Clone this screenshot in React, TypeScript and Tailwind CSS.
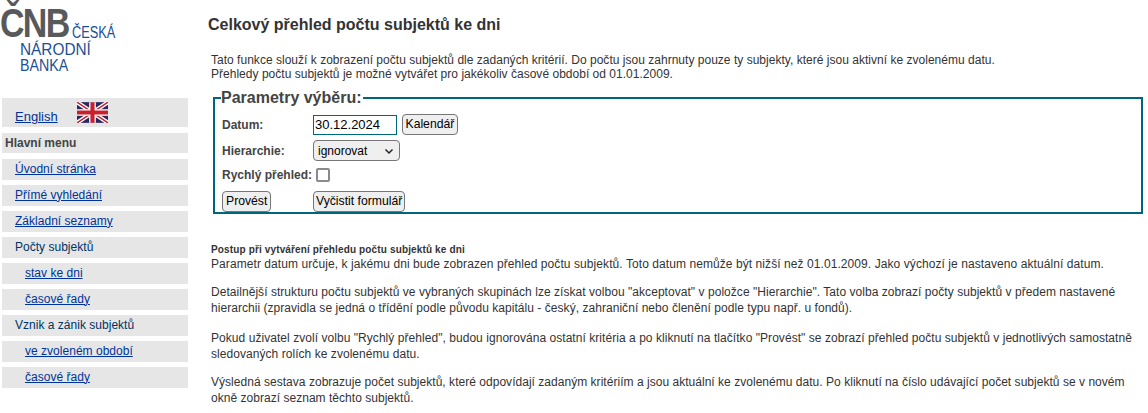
import React from "react";

const sans = { fontFamily: '"Liberation Sans", Arial, sans-serif' };

const Flag = () => (
    <svg width="31" height="21" viewBox="0 0 60 40" className="block">
        <rect width="60" height="40" fill="#27285f" />
        <path d="M0 0L60 40M60 0L0 40" stroke="#fff" strokeWidth="8" />
        <path d="M0 0L60 40M60 0L0 40" stroke="#c8202f" strokeWidth="3" />
        <path d="M30 0V40M0 20H60" stroke="#fff" strokeWidth="13" />
        <path d="M30 0V40M0 20H60" stroke="#c8202f" strokeWidth="8" />
    </svg>
);

const MenuLink = ({ label, sub, plain }: { label: string; sub?: boolean; plain?: boolean }) => (
    <div className={`h-[21px] mb-[5px] bg-[#e6e6e6] flex items-center pb-[2px] text-[12px] tracking-[0.02px] ${sub ? "pl-[23px]" : "pl-[13px]"}`}>
        {plain ? (
            <span className="text-[#003366]">{label}</span>
        ) : (
            <a href="#" className="text-[#003399] underline">{label}</a>
        )}
    </div>
);

const Sidebar = () => (
    <aside className="w-[186px] ml-[2px] shrink-0">
        <div className="h-[98px] relative">
            <div className="absolute left-[-2px] top-[4px] text-[#58595b] font-bold text-[40px] leading-[38px] tracking-[-2px] whitespace-nowrap scale-x-[0.85] origin-left">ČNB</div>
            <div className="absolute left-[70px] top-[25px] text-[#1c4f96] text-[16px] leading-[16px] whitespace-nowrap scale-x-[0.8] origin-left">ČESKÁ</div>
            <div className="absolute left-[18px] top-[42px] text-[#1c4f96] text-[16px] leading-[16px] whitespace-nowrap scale-x-[0.96] origin-left">NÁRODNÍ</div>
            <div className="absolute left-[18px] top-[58px] text-[#1c4f96] text-[16px] leading-[16px] whitespace-nowrap scale-x-[0.89] origin-left">BANKA</div>
        </div>
        <div className="h-[29px] mb-[6px] bg-[#e6e6e6] flex items-start pl-[13px] text-[13px]">
            <a href="#" className="text-[#003399] underline mt-[9px]">English</a>
            <span className="ml-[19px] mt-[4px]"><Flag /></span>
        </div>
        <div className="h-[20px] mb-[6px] bg-[#e6e6e6] flex items-center pl-[3px] text-[12px] font-bold text-[#444]">Hlavní menu</div>
        <MenuLink label="Úvodní stránka" />
        <MenuLink label="Přímé vyhledání" />
        <MenuLink label="Základní seznamy" />
        <MenuLink label="Počty subjektů" plain />
        <MenuLink label="stav ke dni" sub />
        <MenuLink label="časové řady" sub />
        <MenuLink label="Vznik a zánik subjektů" plain />
        <MenuLink label="ve zvoleném období" sub />
        <MenuLink label="časové řady" sub />
    </aside>
);

const btn = "h-[21px] text-[12.2px] text-black bg-[#efefef] border border-[#767676] rounded-[4px] leading-none whitespace-nowrap";

const Form = () => (
    <fieldset className="ml-[5px] mr-[5px] h-[125px] border-2 border-[#006680] px-[6px] pb-0 pt-0 mt-[8px]">
        <legend className="text-[16px] font-bold text-[#444] leading-[18px] px-0 pr-[1px]">Parametry výběru:</legend>
        <div className="flex flex-col text-[12px] text-[#333] ml-[1px]">
            <div className="flex items-center h-[21px] mt-[7px]">
                <span className="w-[91px] font-bold text-[#444]">Datum:</span>
                <input readOnly value="30.12.2024" className="w-[84px] h-[20px] border border-[#006680] px-[1px] text-[13px] text-black outline-none" />
                <button className={`${btn} px-[2.5px] ml-[5px]`}>Kalendář</button>
            </div>
            <div className="flex items-center h-[21px] mt-[5px]">
                <span className="w-[91px] font-bold text-[#444]">Hierarchie:</span>
                <span className="w-[87px] h-[21px] bg-[#efefef] border border-[#767676] rounded-[4px] flex items-center justify-between pl-[4px] pr-[5px] text-black">
                    ignorovat
                    <svg width="10" height="10" viewBox="0 0 10 10"><path d="M1.5 3.5L5 7L8.5 3.5" fill="none" stroke="#222" strokeWidth="1.5" /></svg>
                </span>
            </div>
            <div className="flex items-center h-[21px] mt-[3px]">
                <span className="w-[94px] font-bold text-[#444] whitespace-nowrap">Rychlý přehled:</span>
                <span className="w-[14px] h-[14px] bg-white border-2 border-[#8a8a8a] rounded-[2px] mt-[1px]" />
            </div>
            <div className="flex items-center h-[21px] mt-[6px]">
                <div className="w-[91px]"><button className={`${btn} px-[3px]`}>Provést</button></div>
                <button className={`${btn} px-[2px]`}>Vyčistit formulář</button>
            </div>
        </div>
    </fieldset>
);

const Main = () => (
    <main className="flex-1 ml-[20px] min-w-0">
        <h1 className="text-[16px] font-bold text-[#333] mt-[16px] leading-[18px]">Celkový přehled počtu subjektů ke dni</h1>
        <p className="text-[12px] leading-[14px] text-[#333] mt-[19px] ml-[3px] tracking-[0.02px]">
            Tato funkce slouží k zobrazení počtu subjektů dle zadaných kritérií. Do počtu jsou zahrnuty pouze ty subjekty, které jsou aktivní ke zvolenému datu.<br />
            Přehledy počtu subjektů je možné vytvářet pro jakékoliv časové období od 01.01.2009.
        </p>
        <Form />
        <div className="ml-[3px] mr-[4px] mt-[30px] text-[12px] leading-[16px] text-[#333]">
            <div className="text-[10px] font-bold leading-[11px] tracking-[0.14px]">Postup při vytváření přehledu počtu subjektů ke dni</div>
            <p className="mt-[1px] tracking-[0.075px]">Parametr datum určuje, k jakému dni bude zobrazen přehled počtu subjektů. Toto datum nemůže být nižší než 01.01.2009. Jako výchozí je nastaveno aktuální datum.</p>
            <p className="mt-[12px] tracking-[0.045px]">Detailnější strukturu počtu subjektů ve vybraných skupinách lze získat volbou "akceptovat" v položce "Hierarchie". Tato volba zobrazí počty subjektů v předem nastavené hierarchii (zpravidla se jedná o třídění podle původu kapitálu - český, zahraniční nebo členění podle typu např. u fondů).</p>
            <p className="mt-[14px] tracking-[0.05px]">Pokud uživatel zvolí volbu "Rychlý přehled", budou ignorována ostatní kritéria a po kliknutí na tlačítko "Provést" se zobrazí přehled počtu subjektů v jednotlivých samostatně sledovaných rolích ke zvolenému datu.</p>
            <p className="mt-[12px] tracking-[0.03px]">Výsledná sestava zobrazuje počet subjektů, které odpovídají zadaným kritériím a jsou aktuální ke zvolenému datu. Po kliknutí na číslo udávající počet subjektů se v novém okně zobrazí seznam těchto subjektů.</p>
        </div>
    </main>
);

export default function App() {
    return (
        <div className="w-[1148px] h-[413px] overflow-hidden flex bg-white" style={sans}>
            <Sidebar />
            <Main />
        </div>
    );
}
